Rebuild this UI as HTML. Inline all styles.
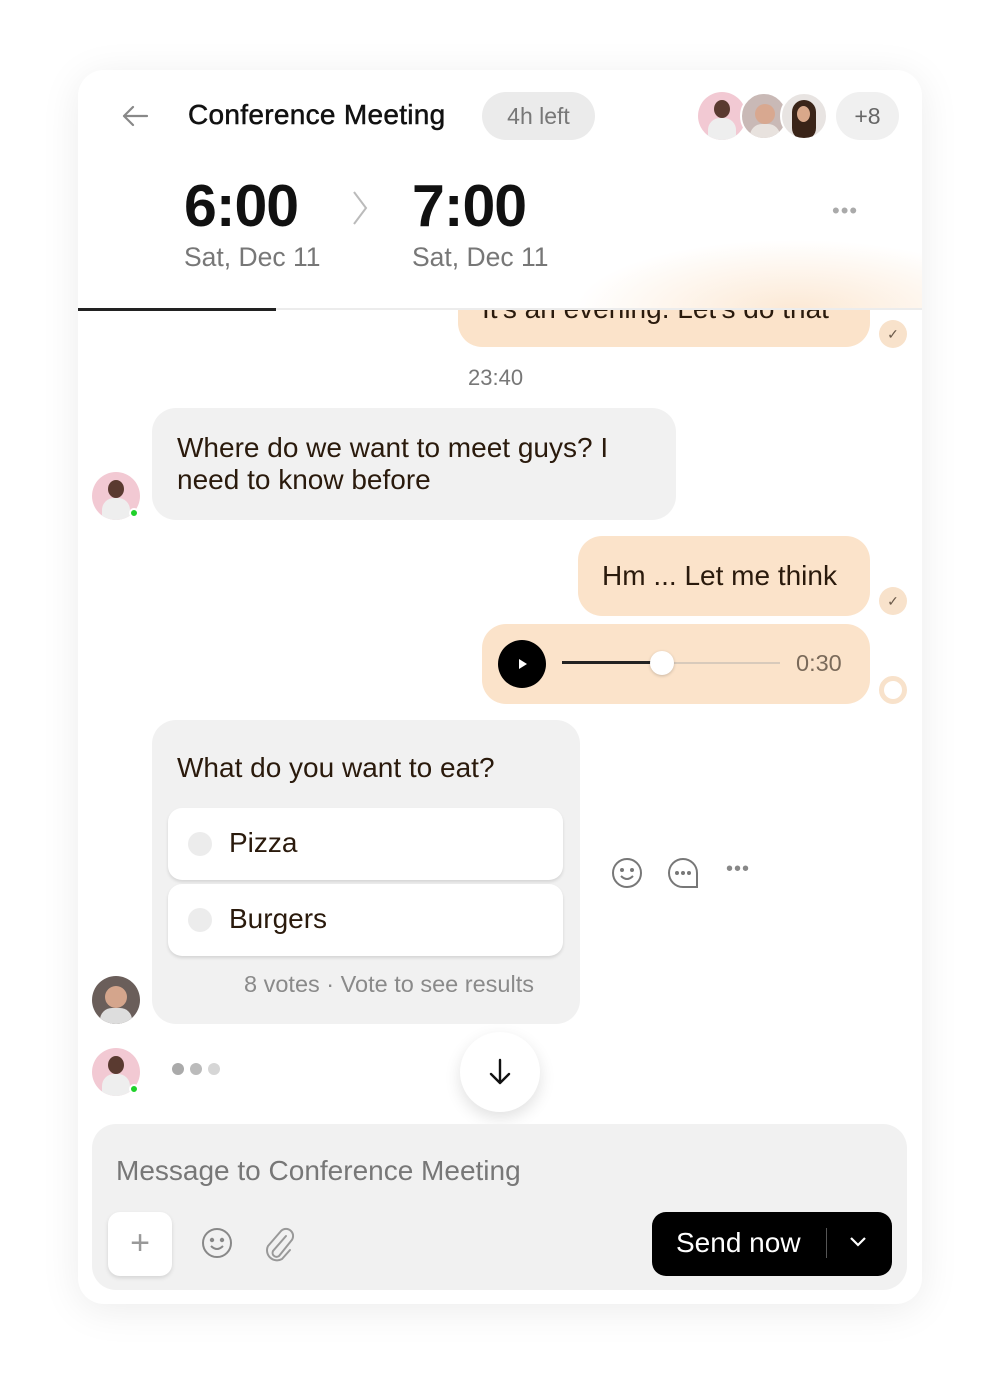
<!DOCTYPE html>
<html><head><style>
*{margin:0;padding:0;box-sizing:border-box}
body{width:1000px;height:1390px;background:#fff;font-family:"Liberation Sans",sans-serif;position:relative;overflow:hidden}
.card{position:absolute;left:78px;top:70px;width:844px;height:1234px;background:#fff;border-radius:26px;box-shadow:0 6px 40px rgba(0,0,0,.08);overflow:hidden}
.a{position:absolute}
.txt{color:#2a1a0c}
.bub{position:absolute;border-radius:24px}
.me{background:#fbe3ca}
.them{background:#f1f1f1}
.av{position:absolute;width:48px;height:48px;border-radius:50%;overflow:hidden}
.dot{position:absolute;width:10px;height:10px;border-radius:50%;background:#1fd12a;border:2px solid #fff}
.tick{position:absolute;width:28px;height:28px;border-radius:50%;background:#f8e2cb;color:#6b5a4a;font-size:14px;text-align:center;line-height:28px}
</style></head><body>
<div class="card">
  <div class="bub me" style="left:380px;top:190px;width:412px;height:87px"></div>
  <div class="a txt" style="left:404px;top:223px;font-size:28px">It's an evening. Let's do that</div>
  <div class="a" style="left:0;top:0;width:844px;height:238px;background:#fff"></div>
  <div class="a" style="left:480px;top:140px;width:364px;height:100px;background:radial-gradient(ellipse 60% 70% at 65% 100%,rgba(251,227,202,.8),rgba(255,255,255,0) 100%)"></div>
  <div class="a" style="left:0;top:238px;width:844px;height:2px;background:#ececec"></div>
  <div class="a" style="left:0;top:238px;width:198px;height:3px;background:#222"></div>
  <svg class="a" style="left:42px;top:34px" width="30" height="24" viewBox="0 0 30 24"><path d="M27 12H4M13 3L4 12l9 9" fill="none" stroke="#888" stroke-width="2.2" stroke-linecap="round" stroke-linejoin="round"/></svg>
  <div class="a" style="left:110px;top:29px;font-size:28px;color:#111;-webkit-text-stroke:0.5px #111;letter-spacing:0.3px">Conference Meeting</div>
  <div class="a" style="left:404px;top:22px;width:113px;height:48px;border-radius:24px;background:#ebebeb;color:#777;font-size:23px;text-align:center;line-height:48px">4h left</div>
  <div class="av" style="left:620px;top:22px;background:#f2c9d3"><div class="a" style="left:16px;top:8px;width:16px;height:18px;border-radius:50%;background:#5a3a30"></div><div class="a" style="left:10px;top:26px;width:28px;height:24px;border-radius:12px 12px 0 0;background:#eee"></div></div>
  <div class="av" style="left:662px;top:22px;background:#c9b9b6;border:2px solid #fff"><div class="a" style="left:13px;top:10px;width:20px;height:20px;border-radius:50%;background:#d8a890"></div><div class="a" style="left:8px;top:30px;width:30px;height:20px;border-radius:12px 12px 0 0;background:#e8e2de"></div></div>
  <div class="av" style="left:702px;top:22px;background:#e8e4e2;border:2px solid #fff"><div class="a" style="left:10px;top:6px;width:24px;height:40px;border-radius:12px;background:#3a2418"></div><div class="a" style="left:15px;top:12px;width:13px;height:16px;border-radius:50%;background:#d9a88a"></div></div>
  <div class="a" style="left:758px;top:22px;width:63px;height:48px;border-radius:24px;background:#f0f0f0;color:#666;font-size:23px;text-align:center;line-height:48px">+8</div>
  <div class="a" style="left:106px;top:102px;font-size:59px;font-weight:bold;color:#111;letter-spacing:-1px">6:00</div>
  <svg class="a" style="left:270px;top:118px" width="24" height="40" viewBox="0 0 24 40"><path d="M6 4l12 16L6 36" fill="none" stroke="#bbb" stroke-width="2"/></svg>
  <div class="a" style="left:334px;top:102px;font-size:59px;font-weight:bold;color:#111;letter-spacing:-1px">7:00</div>
  <div class="a" style="left:106px;top:172px;font-size:26.5px;color:#777">Sat, Dec 11</div>
  <div class="a" style="left:334px;top:172px;font-size:26.5px;color:#777">Sat, Dec 11</div>
  <div class="a" style="left:754px;top:128px;font-size:22px;color:#aaa;letter-spacing:1px">•••</div>
  <div class="tick" style="left:801px;top:250px">✓</div>

  <div class="a" style="left:390px;top:295px;font-size:22px;color:#777">23:40</div>

  <div class="bub them" style="left:74px;top:338px;width:524px;height:112px"></div>
  <div class="a txt" style="left:99px;top:362px;font-size:28px;line-height:32px">Where do we want to meet guys? I<br>need to know before</div>
  <div class="av" style="left:14px;top:402px;background:#f2c9d3"><div class="a" style="left:16px;top:8px;width:16px;height:18px;border-radius:50%;background:#5a3a30"></div><div class="a" style="left:10px;top:26px;width:28px;height:24px;border-radius:12px 12px 0 0;background:#eee"></div></div>
  <div class="dot" style="left:51px;top:438px"></div>

  <div class="bub me" style="left:500px;top:466px;width:292px;height:80px"></div>
  <div class="a txt" style="left:524px;top:490px;font-size:28px">Hm ... Let me think</div>
  <div class="tick" style="left:801px;top:517px">✓</div>

  <div class="bub me" style="left:404px;top:554px;width:388px;height:80px"></div>
  <div class="a" style="left:420px;top:570px;width:48px;height:48px;border-radius:50%;background:#000"></div>
  <svg class="a" style="left:439px;top:588px" width="12" height="12"><path d="M2 1l8 5-8 5z" fill="#fff"/></svg>
  <div class="a" style="left:484px;top:592px;width:218px;height:2px;background:#d8cabb"></div>
  <div class="a" style="left:484px;top:591px;width:100px;height:3px;background:#222"></div>
  <div class="a" style="left:572px;top:581px;width:24px;height:24px;border-radius:50%;background:#fff;box-shadow:0 1px 3px rgba(0,0,0,.2)"></div>
  <div class="a" style="left:718px;top:580px;font-size:23.5px;color:#7a6a5a">0:30</div>
  <div class="a" style="left:801px;top:606px;width:28px;height:28px;border-radius:50%;border:5px solid #f8e2cb"></div>

  <div class="bub them" style="left:74px;top:650px;width:428px;height:304px"></div>
  <div class="a txt" style="left:99px;top:682px;font-size:28px">What do you want to eat?</div>
  <div class="a" style="left:90px;top:738px;width:395px;height:72px;border-radius:14px;background:#fff;box-shadow:0 2px 3px rgba(0,0,0,.12)"></div>
  <div class="a" style="left:110px;top:762px;width:24px;height:24px;border-radius:50%;background:#ececec"></div>
  <div class="a txt" style="left:151px;top:757px;font-size:28px">Pizza</div>
  <div class="a" style="left:90px;top:814px;width:395px;height:72px;border-radius:14px;background:#fff;box-shadow:0 2px 3px rgba(0,0,0,.12)"></div>
  <div class="a" style="left:110px;top:838px;width:24px;height:24px;border-radius:50%;background:#ececec"></div>
  <div class="a txt" style="left:151px;top:833px;font-size:28px">Burgers</div>
  <div class="a" style="left:166px;top:901px;font-size:23.5px;color:#8a8a8a">8 votes · Vote to see results</div>
  <div class="av" style="left:14px;top:906px;background:#6a5e5a"><div class="a" style="left:13px;top:10px;width:22px;height:22px;border-radius:50%;background:#d4a58c"></div><div class="a" style="left:8px;top:32px;width:32px;height:18px;border-radius:12px 12px 0 0;background:#ddd"></div></div>

  <svg class="a" style="left:532px;top:786px" width="34" height="34" viewBox="0 0 34 34" fill="none" stroke="#777" stroke-width="2"><circle cx="17" cy="17" r="14"/><circle cx="12" cy="14" r="1" fill="#777"/><circle cx="22" cy="14" r="1" fill="#777"/><path d="M11 20q6 6 12 0"/></svg>
  <svg class="a" style="left:588px;top:786px" width="34" height="34" viewBox="0 0 34 34" fill="none" stroke="#777" stroke-width="2"><path d="M17 3a14 14 0 1 0 0 28h14v-14A14 14 0 0 0 17 3z"/><circle cx="11" cy="17" r="1" fill="#777"/><circle cx="17" cy="17" r="1" fill="#777"/><circle cx="23" cy="17" r="1" fill="#777"/></svg>
  <div class="a" style="left:648px;top:788px;font-size:20px;color:#888;letter-spacing:1px">•••</div>

  <div class="av" style="left:14px;top:978px;background:#f2c9d3"><div class="a" style="left:16px;top:8px;width:16px;height:18px;border-radius:50%;background:#5a3a30"></div><div class="a" style="left:10px;top:26px;width:28px;height:24px;border-radius:12px 12px 0 0;background:#eee"></div></div>
  <div class="dot" style="left:51px;top:1014px"></div>
  <div class="a" style="left:94px;top:993px;width:12px;height:12px;border-radius:50%;background:#aaa"></div>
  <div class="a" style="left:112px;top:993px;width:12px;height:12px;border-radius:50%;background:#bbb"></div>
  <div class="a" style="left:130px;top:993px;width:12px;height:12px;border-radius:50%;background:#d6d6d6"></div>

  <div class="a" style="left:382px;top:962px;width:80px;height:80px;border-radius:50%;background:#fff;box-shadow:0 6px 16px rgba(0,0,0,.12)"></div>
  <svg class="a" style="left:406px;top:986px" width="32" height="32" viewBox="0 0 32 32" fill="none" stroke="#111" stroke-width="2.4" stroke-linecap="round" stroke-linejoin="round"><path d="M16 4v23M7 18l9 9 9-9"/></svg>

  <div class="a" style="left:14px;top:1054px;width:815px;height:166px;border-radius:24px;background:#f1f1f1"></div>
  <div class="a" style="left:38px;top:1085px;font-size:28px;color:#777">Message to Conference Meeting</div>
  <div class="a" style="left:30px;top:1142px;width:64px;height:64px;border-radius:12px;background:#fff;box-shadow:0 2px 4px rgba(0,0,0,.12);color:#999;font-size:34px;text-align:center;line-height:62px">+</div>
  <svg class="a" style="left:122px;top:1156px" width="34" height="34" viewBox="0 0 34 34" fill="none" stroke="#888" stroke-width="2"><circle cx="17" cy="17" r="14"/><circle cx="12" cy="14" r="1.2" fill="#888"/><circle cx="22" cy="14" r="1.2" fill="#888"/><path d="M11 20q6 6 12 0"/></svg>
  <svg class="a" style="left:184px;top:1154px" width="34" height="38" viewBox="0 0 34 38" fill="none" stroke="#999" stroke-width="2" stroke-linecap="round"><path d="M24 12L11 27a4 4 0 0 0 6 5L29 17a7 7 0 0 0-10-10L6 22a10 10 0 0 0 14 13l8-9"/></svg>
  <div class="a" style="left:574px;top:1142px;width:240px;height:64px;border-radius:14px;background:#000"></div>
  <div class="a" style="left:598px;top:1157px;font-size:28px;color:#fff">Send now</div>
  <div class="a" style="left:748px;top:1158px;width:1px;height:30px;background:#555"></div>
  <svg class="a" style="left:770px;top:1164px" width="20" height="16" viewBox="0 0 20 16"><path d="M3 4l7 7 7-7" fill="none" stroke="#fff" stroke-width="2.2"/></svg>
</div>
</body></html>
